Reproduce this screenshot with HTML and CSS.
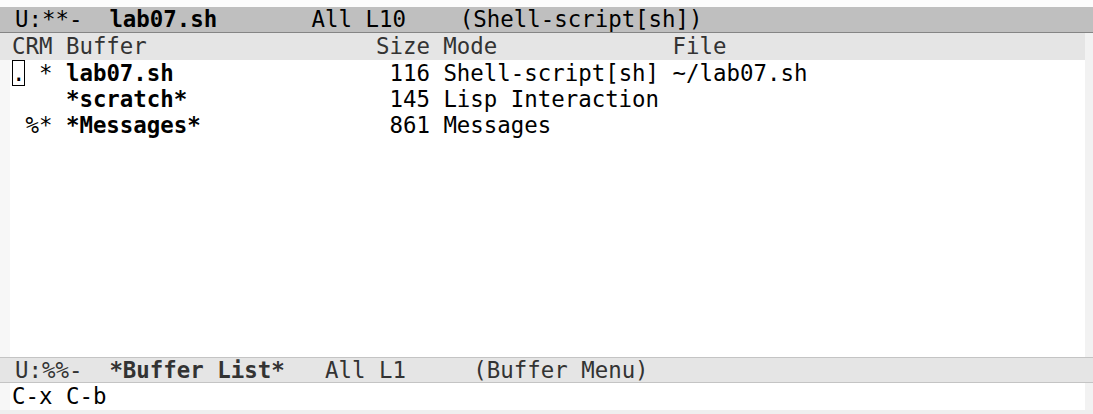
FILE: index.html
```html
<!DOCTYPE html>
<html>
<head>
<meta charset="utf-8">
<link rel="stylesheet" href="styles.css">
</head>
<body>
<div class="frame">
  <div class="topgap"></div>
  <div class="modeline active"><span>U:**-  </span><b>lab07.sh</b><span>       All L10    (Shell-script[sh])</span></div>
  <div class="main">
    <div class="content">
      <div class="header">CRM Buffer                 Size Mode             File</div>
      <div class="body">
        <div class="lfringe"></div>
        <div class="lines">
          <div class="line"><span class="cursor">.</span> * <b>lab07.sh</b>                116 Shell-script[sh] ~/lab07.sh</div>
          <div class="line">    <b>*scratch*</b>               145 Lisp Interaction</div>
          <div class="line"> %* <b>*Messages*</b>              861 Messages</div>
        </div>
      </div>
    </div>
    <div class="rfringe"></div>
  </div>
  <div class="modeline inactive"><span>U:%%-  </span><b>*Buffer List*</b><span>   All L1     (Buffer Menu)</span></div>
  <div class="echo">
    <div class="echo-text">C-x C-b</div>
    <div class="rfringe"></div>
  </div>
  <div class="bottomgap"></div>
</div>
</body>
</html>
```
FILE: styles.css
```css
html, body {
  margin: 0;
  padding: 0;
  background: #ffffff;
}
body {
  font-family: "DejaVu Sans Mono", monospace;
  font-size: 22.4px;
  color: #000;
}
.frame {
  width: 1093px;
  height: 414px;
  display: flex;
  flex-direction: column;
  overflow: hidden;
}
.topgap {
  height: 7px;
  background: #fcfcfc;
}
.modeline {
  white-space: pre;
  padding-left: 15px;
  box-sizing: border-box;
}
.modeline b { font-weight: bold; }
.modeline.active {
  height: 26px;
  line-height: 25px;
  background: #bfbfbf;
  border-bottom: 1px solid #858585;
  color: #000;
}
.modeline.inactive {
  height: 26px;
  line-height: 24px;
  background: #e5e5e5;
  border-top: 1px solid #c4c4c4;
  border-bottom: 1px solid #c4c4c4;
  color: #333;
}
.main {
  display: flex;
  height: 324px;
}
.content {
  flex: 1;
  display: flex;
  flex-direction: column;
}
.header {
  height: 27px;
  line-height: 27px;
  background: #e5e5e5;
  color: #333;
  white-space: pre;
  padding-left: 12px;
}
.body {
  flex: 1;
  display: flex;
  background: #fff;
}
.lfringe {
  width: 10px;
  background: #f7f7f7;
}
.lines {
  flex: 1;
  padding-left: 2px;
}
.line {
  height: 26px;
  line-height: 26px;
  white-space: pre;
}
.line b { font-weight: bold; }
.cursor {
  display: inline-block;
  height: 26px;
  box-shadow: inset 0 0 0 1px #000;
}
.rfringe {
  width: 8px;
  background: #f2f2f2;
}
.echo {
  display: flex;
  height: 27px;
}
.echo-text {
  flex: 1;
  line-height: 27px;
  padding-left: 12px;
  white-space: pre;
  background: linear-gradient(to right, #f7f7f7 0, #f7f7f7 10px, #fff 10px);
}
.bottomgap {
  height: 4px;
  background: #efefef;
}
```
